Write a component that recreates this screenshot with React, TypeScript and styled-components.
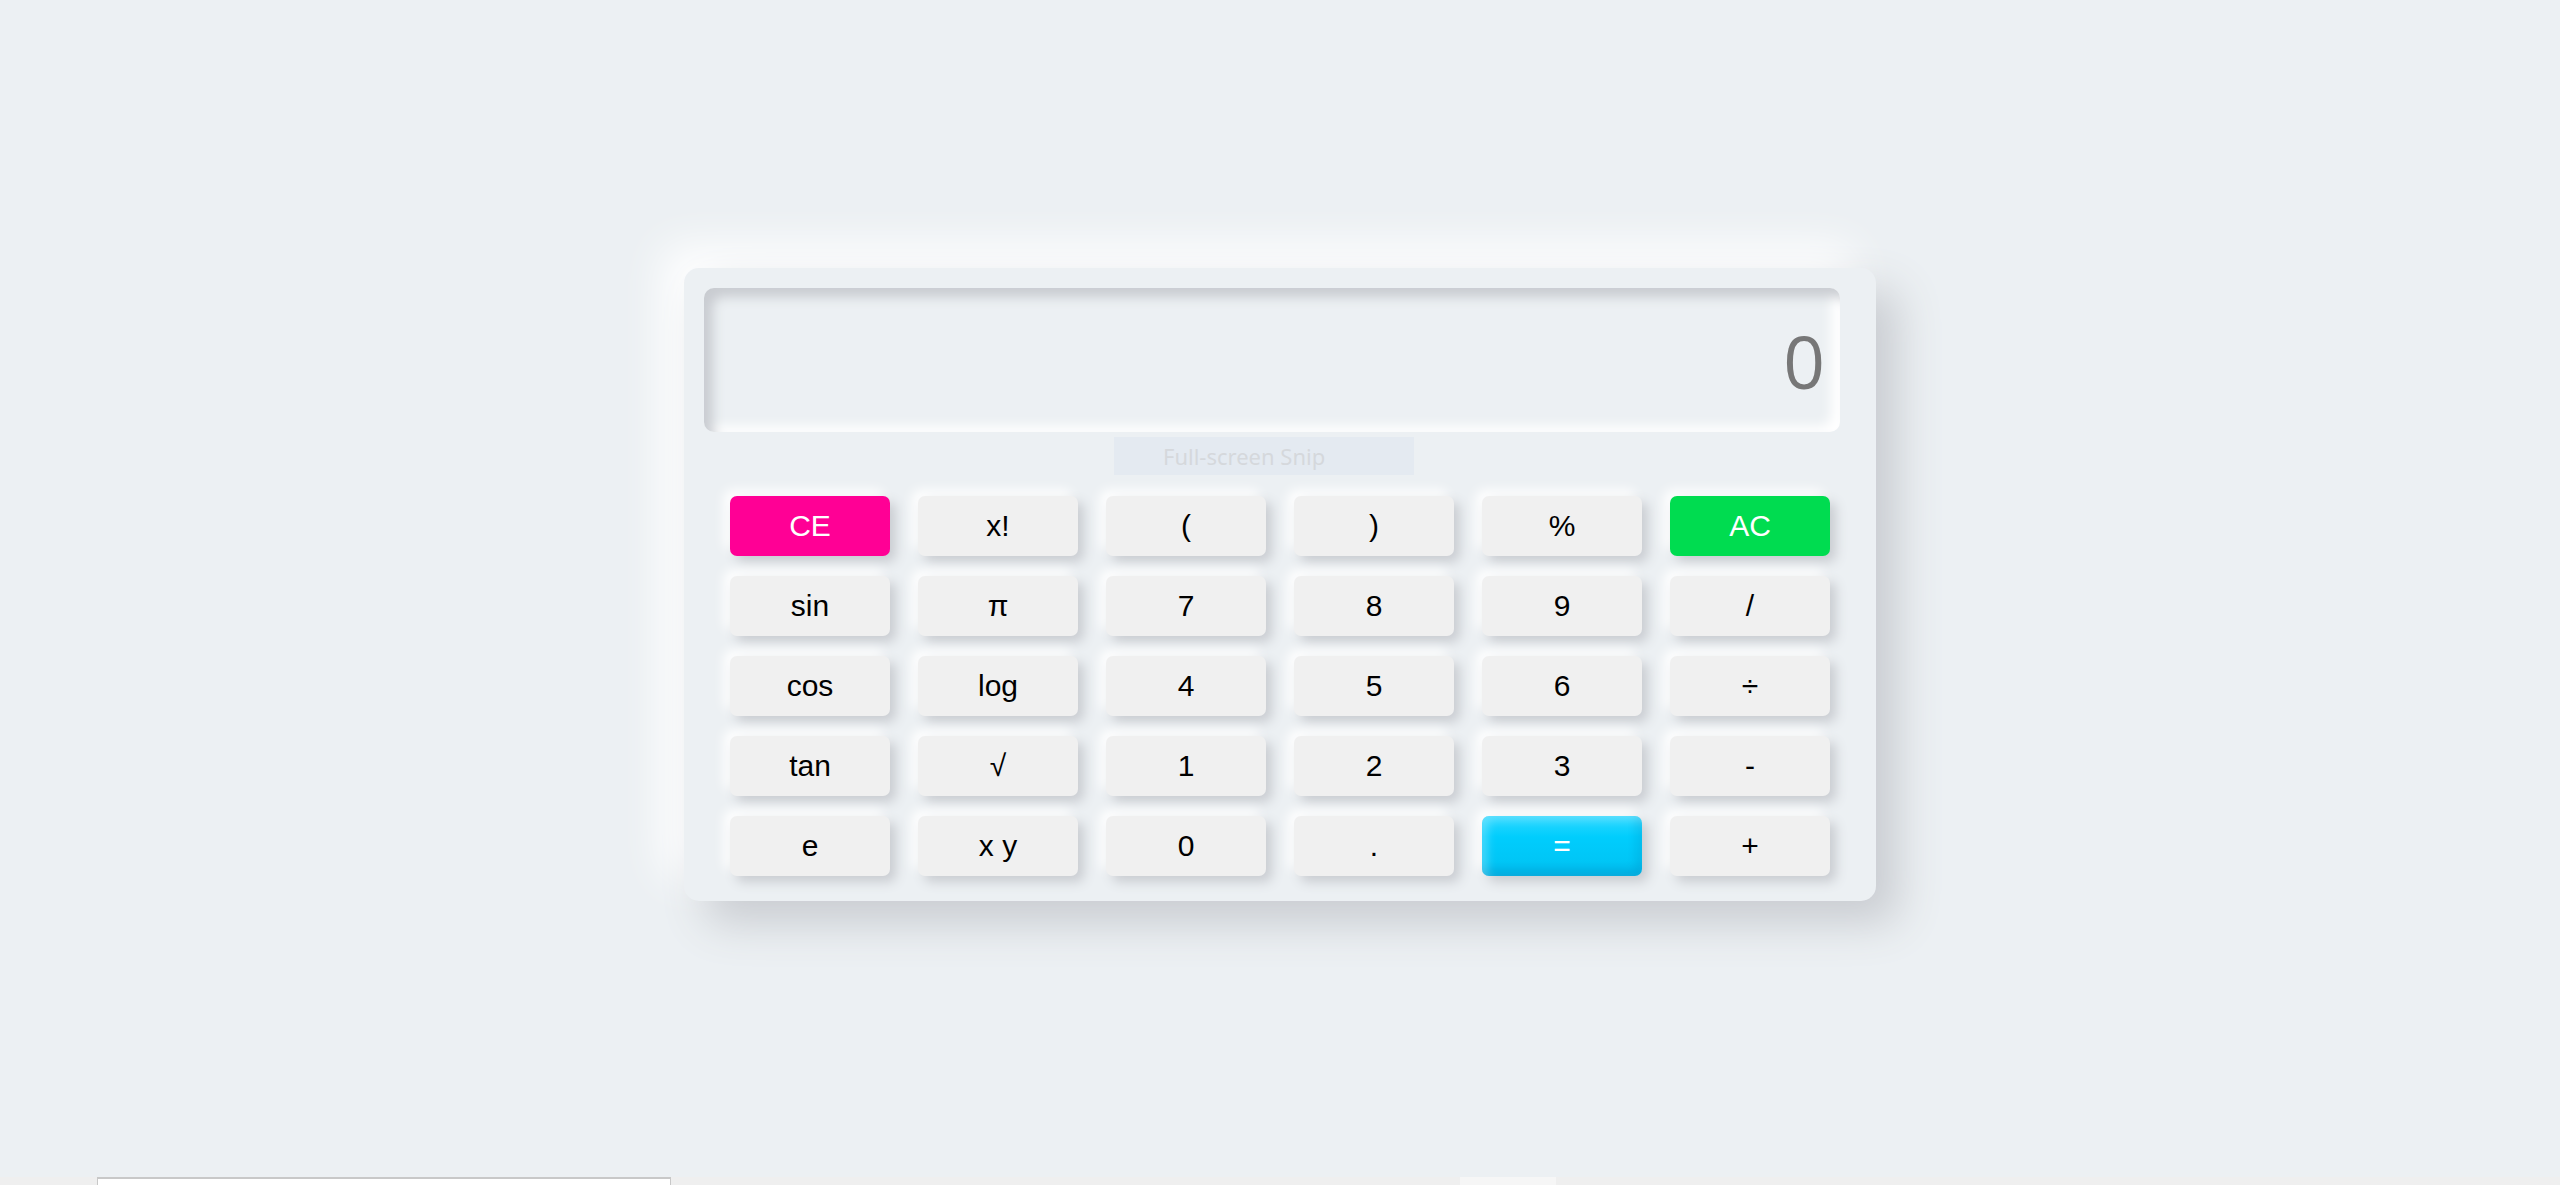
import React from "react";
import styled, { createGlobalStyle } from "styled-components";

const Global = createGlobalStyle`
  html, body { margin: 0; padding: 0; }
  body { background: #ecf0f3; font-family: "Liberation Sans", Arial, sans-serif; }
`;

const Page = styled.main`
  height: 1177px;
  padding-top: 268px;
  box-sizing: border-box;
  display: flex;
  justify-content: center;
  align-items: flex-start;
`;

const Card = styled.div`
  position: relative;
  width: 1192px;
  height: 633px;
  box-sizing: border-box;
  padding: 20px 36px 25px 20px;
  background: #ecf0f3;
  border-radius: 15px;
  box-shadow: 22px 22px 44px #c9ccd1, -22px -22px 44px #ffffff;
  display: flex;
  flex-direction: column;
`;

const Display = styled.div`
  height: 144px;
  border-radius: 10px;
  background: #ecf0f3;
  box-shadow: inset 9px 9px 12px #c9ccd1, inset -9px -6px 12px #ffffff;
  display: flex;
  align-items: center;
  justify-content: flex-end;
  padding-right: 15px;
  font-family: "Open Sans", "Noto Sans", sans-serif;
  font-size: 73px;
  color: #777777;
  line-height: 1;
`;

const Keys = styled.div`
  margin-top: 64px;
  margin-left: 26px;
  display: grid;
  grid-template-columns: repeat(6, 160px);
  grid-auto-rows: 60px;
  column-gap: 28px;
  row-gap: 20px;
`;

type Kind = "plain" | "clear" | "all" | "equals";

const Key = styled.button<{ $kind: Kind }>`
  border: none;
  border-radius: 7px;
  font-family: "Liberation Sans", Arial, sans-serif;
  font-size: 30px;
  padding: 0;
  cursor: pointer;
  color: ${(p) => (p.$kind === "plain" ? "#000000" : "#ffffff")};
  background: ${(p) =>
    p.$kind === "clear"
      ? "#ff0095"
      : p.$kind === "all"
      ? "#00dc50"
      : p.$kind === "equals"
      ? "linear-gradient(180deg, #2fd8ff 0%, #00cdfd 35%, #00c6f6 75%, #00b6e8 100%)"
      : "#f0f0f0"};
  box-shadow: ${(p) =>
    p.$kind === "equals"
      ? "inset 6px 4px 8px rgba(255,255,255,0.25), inset -6px -5px 8px rgba(0,90,150,0.14), 6px 6px 12px #c9ccd1, -6px -6px 12px #ffffff"
      : "6px 6px 12px #c9ccd1, -6px -6px 12px #ffffff"};
`;

const Snip = styled.div`
  position: absolute;
  left: 430px;
  top: 169px;
  width: 300px;
  height: 38px;
  box-sizing: border-box;
  padding-left: 49px;
  background: #e4eaf1;
  display: flex;
  align-items: center;
  font-family: "Noto Sans", "Open Sans", sans-serif;
  font-size: 22px;
  color: #d5d8dc;
`;

const Footer = styled.footer`
  height: 60px;
  background: #efefef;
`;

const FooterRow = styled.div`
  display: flex;
  align-items: flex-start;
  padding-left: 97px;
`;

const InputBox = styled.div`
  width: 574px;
  height: 60px;
  box-sizing: border-box;
  background: #ffffff;
  border: 1px solid #c8c8c8;
  border-top-width: 2px;
`;

const LightBox = styled.div`
  margin-left: 789px;
  width: 96px;
  height: 60px;
  background: #f6f6f6;
`;

const keys: { label: string; kind: Kind }[] = [
  { label: "CE", kind: "clear" },
  { label: "x!", kind: "plain" },
  { label: "(", kind: "plain" },
  { label: ")", kind: "plain" },
  { label: "%", kind: "plain" },
  { label: "AC", kind: "all" },
  { label: "sin", kind: "plain" },
  { label: "π", kind: "plain" },
  { label: "7", kind: "plain" },
  { label: "8", kind: "plain" },
  { label: "9", kind: "plain" },
  { label: "/", kind: "plain" },
  { label: "cos", kind: "plain" },
  { label: "log", kind: "plain" },
  { label: "4", kind: "plain" },
  { label: "5", kind: "plain" },
  { label: "6", kind: "plain" },
  { label: "÷", kind: "plain" },
  { label: "tan", kind: "plain" },
  { label: "√", kind: "plain" },
  { label: "1", kind: "plain" },
  { label: "2", kind: "plain" },
  { label: "3", kind: "plain" },
  { label: "-", kind: "plain" },
  { label: "e", kind: "plain" },
  { label: "x y", kind: "plain" },
  { label: "0", kind: "plain" },
  { label: ".", kind: "plain" },
  { label: "=", kind: "equals" },
  { label: "+", kind: "plain" },
];

export default function App() {
  return (
    <>
      <Global />
      <Page>
        <Card>
          <Display>0</Display>
          <Snip>Full-screen Snip</Snip>
          <Keys>
            {keys.map((k, i) => (
              <Key key={i} $kind={k.kind}>
                {k.label}
              </Key>
            ))}
          </Keys>
        </Card>
      </Page>
      <Footer>
        <FooterRow>
          <InputBox />
          <LightBox />
        </FooterRow>
      </Footer>
    </>
  );
}
